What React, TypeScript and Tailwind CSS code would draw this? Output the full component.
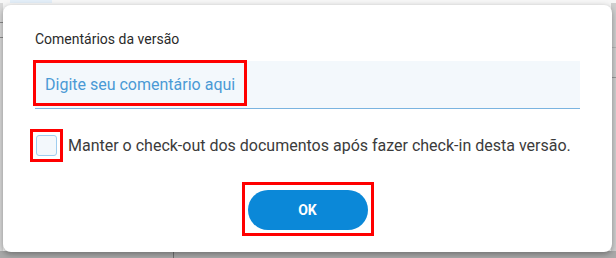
import React, { useState } from 'react';

const font = { fontFamily: 'Roboto, "Noto Sans", Arial, sans-serif' };

const App: React.FC = () => {
  const [comment, setComment] = useState('');
  const [keepCheckout, setKeepCheckout] = useState(false);

  return (
    <div className="relative w-[616px] h-[258px] overflow-hidden bg-[#f6f6f6]" style={font}>
      {/* page behind the overlay */}
      <div className="flex flex-col h-full">
        <div className="flex h-[3px]">
          <div className="ml-[10px] w-[42px] bg-[#e3eef8]" />
        </div>
        <div className="flex flex-1">
          <div className="w-[3px] flex flex-col bg-[#d9d9d9]">
            <div className="mt-[19px] h-px bg-[#8a8a8a]" />
            <div className="mt-[14px] h-px bg-[#8a8a8a]" />
          </div>
          <div className="flex-1" />
          <div className="w-[5px] flex flex-col bg-[#cfcfcf]">
            <div className="mt-[44px] h-px bg-[#b5b5b5]" />
            <div className="mt-[29px] h-px bg-[#9a9a9a]" />
          </div>
        </div>
        <div className="flex h-[7px] bg-[#a9a9a9]">
          <div className="ml-[173px] w-px bg-[#6f6f6f]" />
        </div>
      </div>

      {/* dialog */}
      <div className="absolute left-[3px] top-[5px] w-[609px] h-[247px] rounded-[8px] bg-white shadow-[0_2px_6px_rgba(0,0,0,0.35)] flex flex-col px-[32px] pt-[25px]">
        <label className="text-[14px] leading-[18px] text-[#2a2a2a]">Comentários da versão</label>

        <div className="relative mt-[13px] h-[48px] bg-[#f3f8fc] border-b border-[#7ab4e0] flex items-center">
          <input
            className="w-full h-full bg-transparent outline-none pl-[10px] text-[16px] text-[#333] placeholder:text-[#4a9ad5]"
            placeholder="Digite seu comentário aqui"
            value={comment}
            onChange={(e) => setComment(e.target.value)}
          />
          <div className="absolute -left-[2px] -top-[1px] w-[214px] h-[46px] border-[3px] border-[#ff0000] pointer-events-none" />
        </div>

        <div className="flex items-center mt-[20px] -ml-[5px]">
          <div className="border-[3px] border-[#ff0000] p-[3px]">
            <button
              type="button"
              onClick={() => setKeepCheckout(!keepCheckout)}
              className="block w-[21px] h-[21px] rounded-[3px] border border-[#9fcdef] bg-[#f3f8fc]"
            >
              {keepCheckout && (
                <svg viewBox="0 0 20 20" className="w-full h-full">
                  <path d="M5 10l3.5 3.5L15 7" fill="none" stroke="#0b87d6" strokeWidth="2" />
                </svg>
              )}
            </button>
          </div>
          <span className="ml-[5px] text-[16px] text-[#3b3b3b]">
            Manter o check-out dos documentos após fazer check-in desta versão.
          </span>
        </div>

        <div className="flex justify-center mt-[20px]">
          <div className="border-[3px] border-[#ff0000] pt-[5px] pb-[3px] px-[3px]">
            <button
              type="button"
              className="block w-[120px] h-[40px] rounded-full bg-[#0b88d8] text-white text-[14px] font-bold"
            >
              OK
            </button>
          </div>
        </div>
      </div>
    </div>
  );
};

export default App;
